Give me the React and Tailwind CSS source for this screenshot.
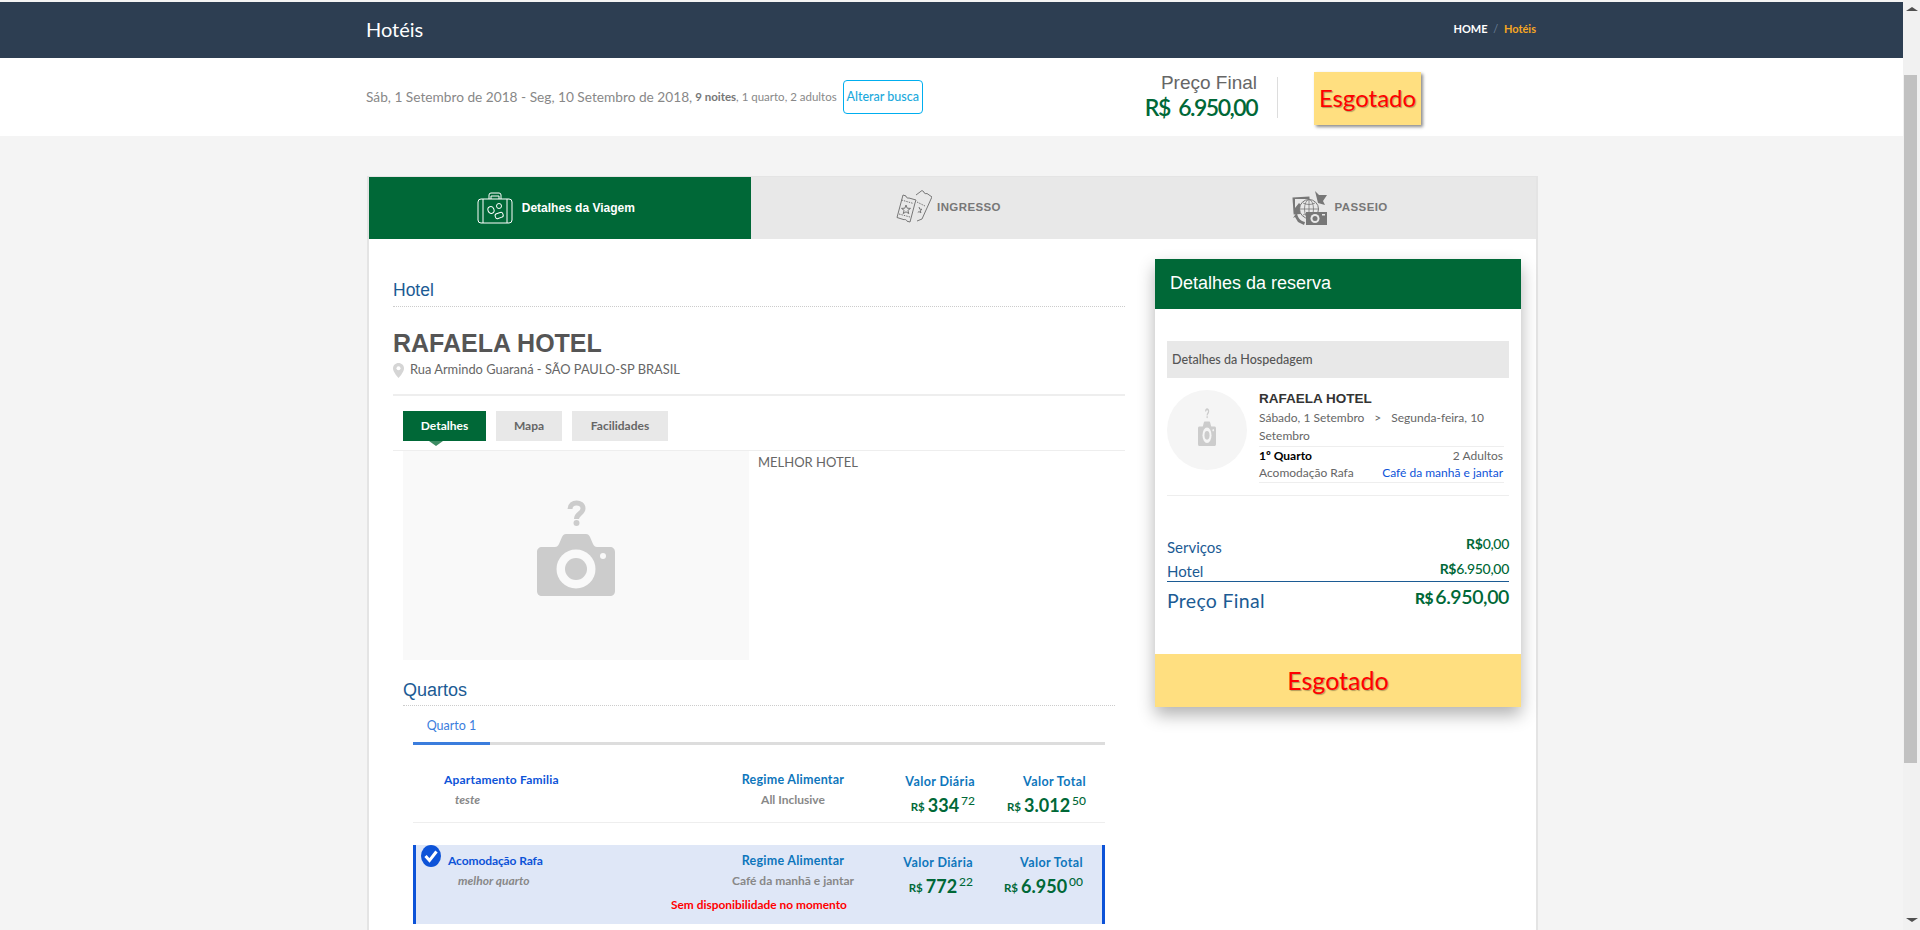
import React from 'react';

const lato = "font-['Lato','Liberation_Sans',sans-serif]";
const arial = "font-['Liberation_Sans',Arial,sans-serif]";

function Suitcase() {
  return (
    <svg width="36" height="32" viewBox="0 0 36 32" fill="none" stroke="#fff" strokeWidth="1">
      <rect x="1" y="7" width="34" height="24" rx="3" />
      <path d="M6 7v24M30 7v24" />
      <path d="M12 7V3a2 2 0 0 1 2-2h8a2 2 0 0 1 2 2v4M14 7V4h8v3" />
      <ellipse cx="14" cy="18" rx="3" ry="3.5" transform="rotate(-20 14 18)" />
      <circle cx="22" cy="14" r="2.5" />
      <rect x="18" y="21" width="8" height="5" rx="2" transform="rotate(-20 22 23)" />
    </svg>
  );
}

function Tickets() {
  return (
    <svg width="36" height="36" viewBox="0 0 36 36" fill="none" stroke="#777" strokeWidth="1">
      <path d="M7 5l3 1c0 1.500 1.500 2.500 3 2l7 2-1 3-5 19-3-.8c-.5-1.500-2-2-3-1.500L1 27.500z" />
      <path d="M5.500 10l12 3.500M3 24l11 3" strokeDasharray="1.500 1" />
      <path d="M20 5l6-4.500 2 1.500c0 1.500 1.500 2 3 1.500l5 3.500-1 2-9 20-5 2" />
      <path d="M21 12l8 4" strokeDasharray="1.500 1" />
      <path d="M10 15l1.200 3.200 3.300.2-2.600 2 .9 3.200L10 21.800l-2.800 1.800.9-3.200-2.600-2 3.300-.2z" />
      <path d="M23 17l.8 2.200 2.200.1-1.700 1.400.6 2.100-1.900-1.200-1.200.8" />
    </svg>
  );
}

function Passeio() {
  return (
    <svg width="36" height="34" viewBox="0 0 36 34">
      <rect x="1" y="6" width="17" height="17" fill="#777" transform="rotate(-4 9 14)" />
      <rect x="3" y="8" width="13" height="9" fill="#e8e8e8" />
      <path d="M3 17l4-5 3 3 2-2 4 4z" fill="#777" />
      <path d="M25 8L23 0l4 4 8 0-4 6 2 4-7-2z" fill="#777" />
      <circle cx="17" cy="18" r="9.500" fill="#e8e8e8" stroke="#777" />
      <path d="M8 18h18M17 9v18M11 12c4 2 8 2 12 0M11 24c4-2 8-2 12 0" stroke="#777" fill="none" strokeWidth=".8" />
      <ellipse cx="17" cy="18" rx="4.500" ry="9.500" stroke="#777" fill="none" strokeWidth=".8" />
      <path d="M5 21c0 5 3 9 8 10l-1 3-6-3-3-5-2 1z" fill="#777" />
      <rect x="14" y="21" width="21" height="13" fill="#777" />
      <circle cx="23" cy="27.500" r="4.500" fill="#e8e8e8" />
      <circle cx="23" cy="27.500" r="2.500" fill="#777" />
      <rect x="30" y="23" width="3" height="1.500" fill="#e8e8e8" />
    </svg>
  );
}

function NoPhoto({ width, height, ring = '#f9f9f9' }) {
  return (
    <svg width={width} height={height} viewBox="0 0 78 96" preserveAspectRatio="none" className="block">
      <path d="M33 9c0-8 13-8 13-.5 0 5-6.500 5-6.500 10.500" fill="none" stroke="#ccc" strokeWidth="5" />
      <circle cx="39.500" cy="23" r="3" fill="#ccc" />
      <path d="M5 47h13c2 0 3-1 4-3l3-7c1-2 2-3 4-3h20c2 0 3 1 4 3l3 7c1 2 2 3 4 3h13c3 0 5 2 5 5v39c0 3-2 5-5 5H5c-3 0-5-2-5-5V52c0-3 2-5 5-5z" fill="#ccc" />
      <circle cx="39" cy="69" r="19.500" fill={ring} />
      <circle cx="39" cy="69" r="11" fill="#ccc" />
      <circle cx="66" cy="56" r="3" fill={ring} />
    </svg>
  );
}

function Price({ whole, cents }) {
  return (
    <div className={`mt-[3px] flex items-start justify-end text-[#006837] ${lato}`}>
      <span className="mt-[7px] mr-[3px] text-[11.5px] font-bold leading-[14px]">R$</span>
      <span className="text-[18px] font-bold leading-[24px]">{whole}</span>
      <span className="ml-[2px] text-[12px] font-medium leading-[16px]">{cents}</span>
    </div>
  );
}

function RoomRows() {
  return (
    <>
      <div className={`mt-[23px] ml-[10px] h-[55px] w-[692px] border-b border-[#eee] pt-[4px] grid grid-cols-[300px_160px_102px_111px] ${lato}`}>
        <div className="pl-[31px]">
          <div className="text-[12px] font-bold leading-[16px] text-[#0d53d8] tracking-[0.2px]">Apartamento Familia</div>
          <div className="mt-[4px] pl-[11px] text-[12px] italic font-bold leading-[16px] text-[#888]">teste</div>
        </div>
        <div className="text-center">
          <div className="text-[12.5px] font-bold leading-[16px] text-[#0e76bc] tracking-[0.25px]">Regime Alimentar</div>
          <div className="mt-[4px] text-[12px] font-bold leading-[16px] text-[#888]">All Inclusive</div>
        </div>
        <div className="text-right">
          <div className="mt-[2px] text-[12.5px] font-bold leading-[16px] text-[#0e76bc] tracking-[0.4px]">Valor Diária</div>
          <Price whole="334" cents="72" />
        </div>
        <div className="text-right">
          <div className="mt-[2px] text-[12.5px] font-bold leading-[16px] text-[#0e76bc] tracking-[0.4px]">Valor Total</div>
          <Price whole="3.012" cents="50" />
        </div>
      </div>
      <div className={`mt-[22px] ml-[10px] h-[79px] w-[692px] border-x-[3px] border-[#0d53d8] bg-[#dfe7f7] pt-[8px] ${lato}`}>
        <div className="grid grid-cols-[297px_160px_100px_110px]">
          <div className="relative pl-[32px]">
            <svg className="absolute left-[5px] top-[-8px]" width="20" height="22" viewBox="0 0 20 22">
              <ellipse cx="10" cy="11" rx="10" ry="11" fill="#0d53d8" />
              <path d="M4.500 11l4 4.500L15.500 6.500" fill="none" stroke="#fff" strokeWidth="3" />
            </svg>
            <div className="text-[12px] font-bold leading-[16px] text-[#0d53d8] tracking-[-0.1px]">Acomodação Rafa</div>
            <div className="mt-[4px] pl-[10px] text-[12px] italic font-bold leading-[16px] text-[#888]">melhor quarto</div>
          </div>
          <div className="text-center">
            <div className="text-[12.5px] font-bold leading-[16px] text-[#0e76bc] tracking-[0.25px]">Regime Alimentar</div>
            <div className="mt-[4px] text-[12px] font-bold leading-[16px] text-[#888]">Café da manhã e jantar</div>
          </div>
          <div className="text-right">
            <div className="mt-[2px] text-[12.5px] font-bold leading-[16px] text-[#0e76bc] tracking-[0.4px]">Valor Diária</div>
            <Price whole="772" cents="22" />
          </div>
          <div className="text-right">
            <div className="mt-[2px] text-[12.5px] font-bold leading-[16px] text-[#0e76bc] tracking-[0.4px]">Valor Total</div>
            <Price whole="6.950" cents="00" />
          </div>
        </div>
        <div className="ml-[255px] mt-[-1px] text-[11.9px] font-bold leading-[16px] text-[#f00]">Sem disponibilidade no momento</div>
      </div>
    </>
  );
}

function LeftColumn() {
  return (
    <div className="ml-[24px] w-[732px]">
      <div className={`flex h-[68px] items-end border-b border-dotted border-[#ccc] pb-[4px] text-[17.5px] leading-[24px] text-[#1c5b94] ${arial}`}>Hotel</div>
      <h1 className={`mt-[21px] text-[25px] font-bold leading-[30px] text-[#555] ${arial}`}>RAFAELA HOTEL</h1>
      <div className={`mt-[2px] flex h-[20px] items-center text-[12.875px] text-[#666] ${lato}`}>
        <svg className="mr-[6px]" width="11" height="15" viewBox="0 0 11 15">
          <path d="M5.500 0C2.500 0 0 2.400 0 5.400 0 9 5.500 15 5.500 15S11 9 11 5.400C11 2.400 8.500 0 5.500 0z" fill="#d5d5d5" />
          <circle cx="5.500" cy="5.300" r="2" fill="#fff" />
        </svg>
        Rua Armindo Guaraná - SÃO PAULO-SP BRASIL
      </div>
      <div className="mt-[14px] border-b-2 border-[#eee]" />
      <div className={`relative flex h-[55px] gap-[10px] border-b border-[#eee] pt-[15px] pl-[10px] text-[12px] font-bold ${lato}`}>
        <div className="flex h-[30px] w-[83px] items-center justify-center bg-[#006837] text-white">Detalhes</div>
        <div className="flex h-[30px] w-[66px] items-center justify-center bg-[#e8e8e8] text-[#666]">Mapa</div>
        <div className="flex h-[30px] w-[96px] items-center justify-center bg-[#e8e8e8] text-[#666]">Facilidades</div>
        <div className="absolute left-[36px] top-[45px] h-0 w-0 border-x-[7px] border-t-[5px] border-x-transparent border-t-[#3d8c63]" />
      </div>
      <div className="flex pl-[10px]">
        <div className="flex h-[209px] w-[346px] items-center justify-center bg-[#f9f9f9] pb-[16px]">
          <NoPhoto width={78} height={96} />
        </div>
        <div className={`ml-[9px] mt-[3px] text-[13px] leading-[16px] text-[#666] ${lato}`}>MELHOR HOTEL</div>
      </div>
      <div className={`ml-[10px] flex h-[46px] w-[712px] items-end border-b border-dotted border-[#ccc] pb-[3px] text-[18px] leading-[24px] text-[#1c5b94] ${arial}`}>Quartos</div>
      <div className={`ml-[20px] h-[39px] w-[692px] border-b-[3px] border-[#ddd] ${lato}`}>
        <div className="flex h-[39px] w-[77px] items-start justify-center border-b-[3px] border-[#3b7ddd] pt-[12px] text-[12.5px] leading-[16px] text-[#3b7ddd]">Quarto 1</div>
      </div>
      <div className="ml-[10px]"><RoomRows /></div>
    </div>
  );
}

function SidePanel() {
  return (
    <div className="ml-[30px] mt-[20px] h-[448px] w-[366px] bg-white shadow-[0_8px_16px_rgba(0,0,0,0.3)]">
      <div className={`flex h-[50px] items-center bg-[#006837] pb-[1px] pl-[15px] text-[18px] text-white ${arial}`}>Detalhes da reserva</div>
      <div className={`h-[345px] px-[12px] pt-[32px] ${lato}`}>
        <div className="flex h-[37px] items-center bg-[#e8e8e8] pl-[5px] pt-[1px] text-[12.5px] font-medium text-[#555]">Detalhes da Hospedagem</div>
        <div className="mt-[12px] flex border-b border-[#eee] pb-[12px]">
          <div className="flex h-[80px] w-[80px] shrink-0 items-center justify-center rounded-full bg-[#f5f5f5] pb-[6px]">
            <NoPhoto width={18} height={38} ring="#f5f5f5" />
          </div>
          <div className="ml-[12px] w-[245px]">
            <div className={`text-[13.5px] font-bold leading-[18px] text-[#333] ${arial}`}>RAFAELA HOTEL</div>
            <div className="mt-[1px] border-b border-[#eee] pb-[1px] text-[12px] leading-[18px] text-[#666]">
              <div className="flex">
                <span>Sábado, 1 Setembro</span>
                <span className="mx-[10px]">{'>'}</span>
                <span>Segunda-feira, 10</span>
              </div>
              <div>Setembro</div>
            </div>
            <div className="flex justify-between pr-[1px] text-[12px] leading-[17px]">
              <span className="font-bold text-black">1º Quarto</span>
              <span className="text-[#666]">2 Adultos</span>
            </div>
            <div className="flex justify-between border-b border-[#eee] pr-[1px] text-[12px] leading-[18px]">
              <span className="text-[#666]">Acomodação Rafa</span>
              <span className="text-[#0d53d8]">Café da manhã e jantar</span>
            </div>
          </div>
        </div>
        <div className="mt-[37px] flex h-[24px] items-end justify-between pb-[1px] text-[15px] leading-[18px] text-[#1c5b94]">
          <span>Serviços</span>
          <span className="mb-[3px] text-[14px] font-medium tracking-[-0.3px] text-[#006837]"><b>R$</b>0,00</span>
        </div>
        <div className="flex h-[25px] items-end justify-between border-b border-[#1c5b94] pb-[1px] text-[15px] leading-[18px] text-[#1c5b94]">
          <span>Hotel</span>
          <span className="mb-[2px] text-[14px] font-medium tracking-[-0.3px] text-[#006837]"><b>R$</b>6.950,00</span>
        </div>
        <div className="flex items-start justify-between pt-[5px] text-[#1c5b94]">
          <span className="text-[19.5px] leading-[28px] tracking-[0.3px]">Preço Final</span>
          <span className="mt-[-2px] text-[19.5px] font-semibold leading-[24px] tracking-[-0.4px] text-[#006837]"><b className="mr-[2px] text-[15.5px]">R$</b>6.950,00</span>
        </div>
      </div>
      <div className={`flex h-[53px] items-center justify-center bg-[#ffdf80] text-[25px] text-[#f00] [text-shadow:1px_1px_1px_rgba(0,0,0,0.3)] ${lato}`}>Esgotado</div>
    </div>
  );
}

export default function App() {
  return (
    <div className="flex h-[930px] w-[1920px] overflow-hidden bg-[#f4f4f4]">
      <div className="w-[1903px] shrink-0 pt-[2px]">
        <div className="h-[56px] bg-[#2d3e52]">
          <div className={`ml-[366px] flex h-[56px] w-[1172px] items-center justify-between pr-[2px] pb-[2px] ${lato}`}>
            <span className="text-[20px] text-white">Hotéis</span>
            <span className="text-[11px] font-bold text-white">HOME <span className="mx-[3px] font-normal text-[#6b7f99]">/</span> <span className="text-[#f5a623]">Hotéis</span></span>
          </div>
        </div>
        <div className="h-[78px] bg-white">
          <div className="ml-[366px] flex h-[78px] w-[1172px] items-center">
            <div className={`flex w-[557px] items-center text-[13.7px] text-[#888] ${lato}`}>
              <span>Sáb, 1 Setembro de 2018 - Seg, 10 Setembro de 2018,</span>
              <span className="ml-[3px] text-[11.5px]"><b className="text-[#777]">9 noites</b>, 1 quarto, 2 adultos</span>
              <span className="ml-[6px] flex h-[34px] w-[80px] shrink-0 items-center justify-center rounded-[4px] border border-[#00aeef] text-[12.5px] font-medium text-[#1ba9dc]">Alterar busca</span>
            </div>
            <div className="w-[334px] text-right">
              <div className={`text-[19px] leading-[20px] text-[#666] ${arial}`}>Preço Final</div>
              <div className={`text-[23px] font-semibold leading-[28px] tracking-[-1.5px] text-[#006837] ${lato}`}>R$&nbsp; 6.950,00</div>
            </div>
            <div className="ml-[20px] h-[41px] border-l border-[#ddd]" />
            <div className={`ml-[36px] mt-[2px] flex h-[53px] w-[107px] items-center justify-center bg-[#ffdf80] text-[24px] text-[#f00] shadow-[2px_2px_3px_rgba(0,0,0,0.45)] [text-shadow:1px_1px_1px_rgba(0,0,0,0.3)] ${lato}`}>Esgotado</div>
          </div>
        </div>
        <div className="ml-[367px] mt-[40px] h-[800px] w-[1171px] border-x-2 border-t border-[#e4e4e4] bg-white">
          <div className={`flex h-[62px] bg-[#e8e8e8] text-[11.5px] font-bold ${arial}`}>
            <div className="flex w-[382px] items-center justify-center gap-[9px] pr-[8px] bg-[#006837] text-[12px] text-white">
              <Suitcase /> Detalhes da Viagem
            </div>
            <div className="flex w-[393px] items-center justify-center gap-[5px] pl-[3px] tracking-[0.4px] text-[#777]">
              <Tickets /> INGRESSO
            </div>
            <div className="flex w-[393px] items-center justify-center gap-[7px] tracking-[0.4px] text-[#777]">
              <Passeio /> PASSEIO
            </div>
          </div>
          <div className="flex">
            <LeftColumn />
            <SidePanel />
          </div>
        </div>
      </div>
      <div className="flex h-[930px] w-[17px] flex-col items-center bg-[#f1f1f1]">
        <div className="mt-[7px] h-0 w-0 border-x-[6px] border-b-[4px] border-x-transparent border-b-[#505050]" />
        <div className="ml-[-2px] mt-[64px] h-[688px] w-[13px] bg-[#c1c1c1]" />
        <div className="mt-[155px] h-0 w-0 border-x-[6px] border-t-[4px] border-x-transparent border-t-[#505050]" />
      </div>
    </div>
  );
}
